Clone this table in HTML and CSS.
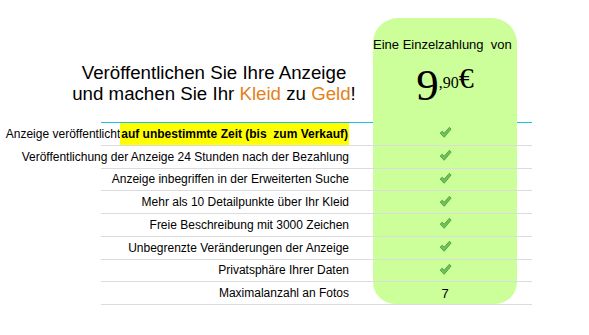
FILE: index.html
```html
<!DOCTYPE html>
<html>
  <head>
    <title>Anzeige veröffentlichen</title>
    <meta charset="utf-8">
    <link rel="stylesheet" href="styles.css">
  </head>
  <body>
    <div class="pricing">
      <div class="pricing-head">
        <div class="headline">
          <div>Veröffentlichen Sie Ihre Anzeige</div>
          <div>und machen Sie Ihr <span class="accent">Kleid</span> zu <span class="accent">Geld</span>!</div>
        </div>
        <div class="plan-head">
          <div class="plan-title">Eine Einzelzahlung&nbsp; von</div>
          <div class="price"><span class="price-main">9</span><span class="price-cents">,90</span><span class="price-cur">€</span></div>
        </div>
        <div class="head-end"></div>
      </div>

      <div class="row">
        <div class="label">Anzeige veröffentlicht<span class="mark">auf unbestimmte Zeit (bis&nbsp; zum Verkauf)</span></div>
        <div class="plan"><svg class="check" viewBox="0 0 12 12"><path d="M1 6.6 L3 4.8 L4.8 6.6 L9.6 1.2 L11.2 2.8 L4.8 10.4 Z"/></svg></div>
      </div>
      <div class="row">
        <div class="label">Veröffentlichung der Anzeige 24 Stunden nach der Bezahlung</div>
        <div class="plan"><svg class="check" viewBox="0 0 12 12"><path d="M1 6.6 L3 4.8 L4.8 6.6 L9.6 1.2 L11.2 2.8 L4.8 10.4 Z"/></svg></div>
      </div>
      <div class="row">
        <div class="label">Anzeige inbegriffen in der Erweiterten Suche</div>
        <div class="plan"><svg class="check" viewBox="0 0 12 12"><path d="M1 6.6 L3 4.8 L4.8 6.6 L9.6 1.2 L11.2 2.8 L4.8 10.4 Z"/></svg></div>
      </div>
      <div class="row">
        <div class="label">Mehr als 10 Detailpunkte über Ihr Kleid</div>
        <div class="plan"><svg class="check" viewBox="0 0 12 12"><path d="M1 6.6 L3 4.8 L4.8 6.6 L9.6 1.2 L11.2 2.8 L4.8 10.4 Z"/></svg></div>
      </div>
      <div class="row">
        <div class="label">Freie Beschreibung mit 3000 Zeichen</div>
        <div class="plan"><svg class="check" viewBox="0 0 12 12"><path d="M1 6.6 L3 4.8 L4.8 6.6 L9.6 1.2 L11.2 2.8 L4.8 10.4 Z"/></svg></div>
      </div>
      <div class="row">
        <div class="label">Unbegrenzte Veränderungen der Anzeige</div>
        <div class="plan"><svg class="check" viewBox="0 0 12 12"><path d="M1 6.6 L3 4.8 L4.8 6.6 L9.6 1.2 L11.2 2.8 L4.8 10.4 Z"/></svg></div>
      </div>
      <div class="row">
        <div class="label">Privatsphäre Ihrer Daten</div>
        <div class="plan"><svg class="check" viewBox="0 0 12 12"><path d="M1 6.6 L3 4.8 L4.8 6.6 L9.6 1.2 L11.2 2.8 L4.8 10.4 Z"/></svg></div>
      </div>
      <div class="row">
        <div class="label">Maximalanzahl an Fotos</div>
        <div class="plan plan-last">7</div>
      </div>
    </div>
  </body>
</html>
```

FILE: styles.css
```css
body {
  margin: 0;
  background-color: #fff;
  font-family: "Liberation Sans", Arial, sans-serif;
  color: #000;
}

.pricing {
  width: 431px;
  margin: 18px 0 0 101px;
}

.pricing-head,
.row {
  display: grid;
  grid-template-columns: 272px 144px 15px;
}

.headline {
  display: flex;
  flex-direction: column;
  align-items: center;
  justify-content: flex-end;
  padding: 0 46px 18px 0;
  border-bottom: 1px solid #14c2ea;
  font-size: 18.7px;
  line-height: 21px;
  white-space: nowrap;
}

.accent {
  color: #e47f1b;
}

.head-end {
  border-bottom: 1px solid #14c2ea;
}

.plan-head {
  height: 105px;
  background-color: #ccfe99;
  border-radius: 25px 25px 0 0;
  text-align: center;
}

.plan-title {
  padding: 19px 8px 0 0;
  font-size: 13px;
  white-space: nowrap;
}

.price {
  margin-top: 11px;
  font-family: "Liberation Serif", "Times New Roman", serif;
  line-height: 30px;
}

.price-main {
  font-size: 45px;
  vertical-align: -12px;
}

.price-cents {
  font-size: 16px;
}

.price-cur {
  font-size: 30px;
}

.row {
  height: 21.75px;
  border-bottom: 1px solid #dcdcdc;
  font-size: 12px;
}

.label {
  display: flex;
  justify-content: flex-end;
  align-items: center;
  padding-right: 24px;
  white-space: nowrap;
}

.mark {
  display: flex;
  align-items: center;
  align-self: stretch;
  padding: 0 1px;
  background-color: #ffff00;
  font-weight: bold;
}

.plan {
  display: flex;
  justify-content: center;
  align-items: center;
  background-color: #ccfe99;
}

.plan-last {
  border-radius: 0 0 25px 25px;
  font-size: 13px;
}

.check {
  width: 13px;
  height: 13px;
  margin-bottom: 2px;
}

.check path {
  fill: #6fc25a;
  stroke: #4c9c40;
  stroke-width: 0.8;
  stroke-linejoin: round;
}
```
